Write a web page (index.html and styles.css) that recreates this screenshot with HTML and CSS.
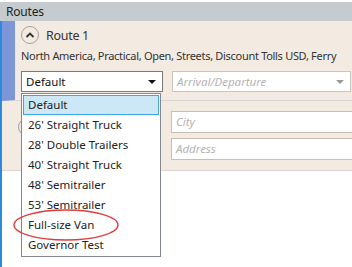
FILE: index.html
```html
<!DOCTYPE html>
<html lang="en">
<head>
    <meta charset="UTF-8">
    <title>Routes</title>
    <link rel="stylesheet" href="styles.css">
</head>
<body>
    <div class="window">
        <div class="header">Routes</div>

        <div class="main">
            <div class="route route-selected">
                <div class="route-head">
                    <span class="toggle">
                        <svg width="10" height="8" viewBox="0 0 10 8"><path d="M1.5 6 L5 2.5 L8.5 6" fill="none" stroke="#333" stroke-width="1.8"/></svg>
                    </span>
                    <span class="route-name">Route 1</span>
                </div>
                <div class="route-desc">North America, Practical, Open, Streets, Discount Tolls USD, Ferry</div>
                <div class="fields">
                    <div class="combo combo-active">
                        <span>Default</span>
                        <span class="arrow"></span>
                    </div>
                    <div class="combo combo-empty">
                        <span class="placeholder">Arrival/Departure</span>
                        <span class="arrow arrow-light"></span>
                    </div>
                </div>
            </div>

            <div class="route route-second">
                <span class="toggle toggle-hidden"></span>
                <div class="stack">
                    <div class="textbox"><span class="placeholder">City</span></div>
                    <div class="textbox"><span class="placeholder">Address</span></div>
                </div>
            </div>
        </div>

        <!-- open list of the vehicle combo -->
        <ul class="dropdown">
            <li class="item-selected">Default</li>
            <li>26' Straight Truck</li>
            <li>28' Double Trailers</li>
            <li>40' Straight Truck</li>
            <li>48' Semitrailer</li>
            <li>53' Semitrailer</li>
            <li>Full-size Van</li>
            <li>Governor Test</li>
        </ul>

        <svg class="mark" width="110" height="34" viewBox="0 0 110 34">
            <ellipse cx="55" cy="17" rx="52" ry="15" fill="none" stroke="#e23a3a" stroke-width="1.3"/>
        </svg>
    </div>
</body>
</html>
```

FILE: styles.css
```css
body {
    margin: 0;
    font-family: "Noto Sans", "Open Sans", sans-serif;
    font-size: 11.5px;
    color: #333;
    background: #fff;
}
.window {
    position: relative;
    width: 352px;
    height: 267px;
    overflow: hidden;
    padding-top: 2px;
    box-sizing: border-box;
}
.header {
    height: 19px;
    line-height: 19px;
    background: #c6cbd0;
    padding-left: 6px;
    font-size: 12px;
    letter-spacing: -0.2px;
    color: #1e1e1e;
}
.main {
    border-left: 2px solid #2d89de;
    height: 246px;
}
.route {
    background: #f3ebe1;
}
.route-selected {
    border-left: 13px solid #7c96d8;
    padding: 5px 0 8px 6px;
    border-bottom: 1px solid #d8d6d4;
}
.route-head {
    display: flex;
    align-items: center;
    gap: 7px;
    height: 18px;
}
.toggle {
    width: 16px;
    height: 16px;
    border: 1px solid #a2a2a2;
    border-radius: 50%;
    display: flex;
    align-items: center;
    justify-content: center;
}
.route-name {
    font-size: 12.5px;
    letter-spacing: -0.3px;
    color: #333;
}
.route-desc {
    margin-top: 4px;
    height: 16px;
    line-height: 16px;
    font-size: 11px;
    letter-spacing: -0.3px;
    white-space: nowrap;
}
.fields {
    display: flex;
    gap: 9px;
    margin-top: 7px;
}
.combo {
    border: 1px solid #7a7a7a;
    background: #fff;
    display: flex;
    align-items: center;
    justify-content: space-between;
    padding: 0 6px 0 4px;
    box-sizing: border-box;
    height: 21px;
}
.combo-active {
    width: 142px;
    color: #111;
}
.combo-empty {
    width: 179px;
    border-color: #cbc4ba;
}
.arrow {
    width: 0;
    height: 0;
    border-left: 4px solid transparent;
    border-right: 4px solid transparent;
    border-top: 4px solid #111;
}
.arrow-light {
    border-top-color: #999;
}
.placeholder {
    font-style: italic;
    color: #b3b3b3;
}
.route-second {
    display: flex;
    align-items: flex-start;
    padding: 10px 0 10px 16px;
    border-bottom: 1px solid #d8d6d4;
}
.toggle-hidden {
    margin-top: 7px;
}
.stack {
    margin-left: 135px;
    display: flex;
    flex-direction: column;
    gap: 5px;
    flex: 1;
}
.textbox {
    height: 22px;
    border: 1px solid #c8bfb3;
    border-right: none;
    background: #fff;
    box-sizing: border-box;
    padding-left: 4px;
    line-height: 20px;
}
.dropdown {
    position: absolute;
    left: 21px;
    top: 93px;
    width: 140px;
    margin: 0;
    padding: 1px;
    list-style: none;
    background: #fff;
    border: 1px solid #828790;
    box-sizing: border-box;
}
.dropdown li {
    height: 20px;
    line-height: 18px;
    padding-left: 4px;
    color: #222;
    border: 1px solid transparent;
    box-sizing: border-box;
}
.dropdown .item-selected {
    background: #cce8f7;
    border-color: #3fa6dd;
}
.mark {
    position: absolute;
    left: 11px;
    top: 208px;
}
```
